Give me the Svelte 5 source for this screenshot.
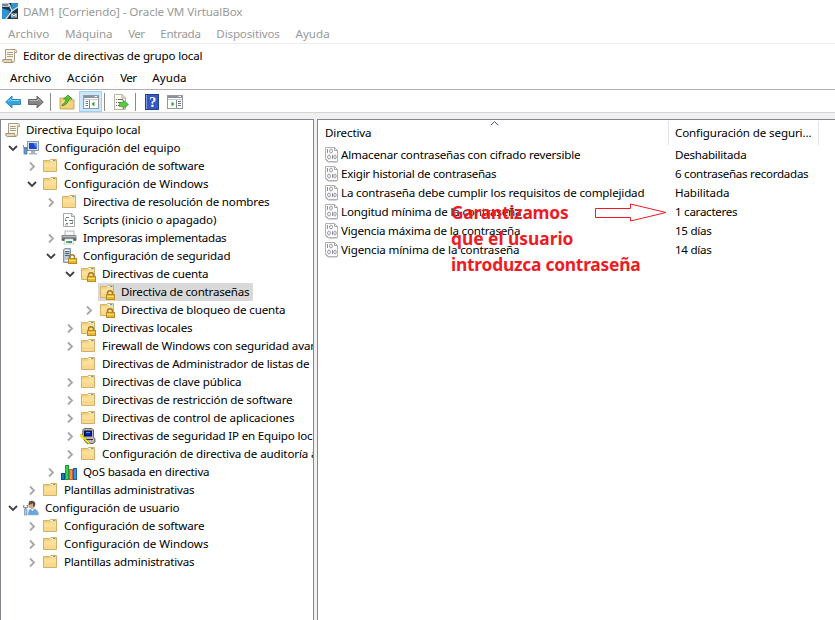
<script>
  const tree = [
    [0, 'scroll', '', 'Directiva Equipo local', 114],
    [1, 'computer', 'v', 'Configuración del equipo', 135],
    [2, 'folder', '>', 'Configuración de software', 140],
    [2, 'folder', 'v', 'Configuración de Windows', 144],
    [3, 'folder', '>', 'Directiva de resolución de nombres', 186],
    [3, 'script', '', 'Scripts (inicio o apagado)', 133],
    [3, 'printer', '>', 'Impresoras implementadas', 143],
    [3, 'server', 'v', 'Configuración de seguridad', 147],
    [4, 'locked', 'v', 'Directivas de cuenta', 106],
    [5, 'locked', '', 'Directiva de contraseñas', 128, true],
    [5, 'locked', '>', 'Directiva de bloqueo de cuenta', 164],
    [4, 'locked', '>', 'Directivas locales', 90],
    [4, 'folder', '>', 'Firewall de Windows con seguridad avan', 215],
    [4, 'folder', '', 'Directivas de Administrador de listas de', 207],
    [4, 'folder', '>', 'Directivas de clave pública', 139],
    [4, 'folder', '>', 'Directivas de restricción de software', 190],
    [4, 'folder', '>', 'Directivas de control de aplicaciones', 192],
    [4, 'ipsec', '>', 'Directivas de seguridad IP en Equipo loc', 210],
    [4, 'folder', '>', 'Configuración de directiva de auditoría a', 215],
    [3, 'chart', '>', 'QoS basada en directiva', 126],
    [2, 'folder', '>', 'Plantillas administrativas', 130],
    [1, 'user', 'v', 'Configuración de usuario', 134],
    [2, 'folder', '>', 'Configuración de software', 140],
    [2, 'folder', '>', 'Configuración de Windows', 144],
    [2, 'folder', '>', 'Plantillas administrativas', 130]
  ];
  const policies = [
    ['Almacenar contraseñas con cifrado reversible', 239, 'Deshabilitada', 71],
    ['Exigir historial de contraseñas', 155, '6 contraseñas recordadas', 133],
    ['La contraseña debe cumplir los requisitos de complejidad', 303, 'Habilitada', 54],
    ['Longitud mínima de la contraseña', 180, '1 caracteres', 62],
    ['Vigencia máxima de la contraseña', 179, '15 días', 36],
    ['Vigencia mínima de la contraseña', 178, '14 días', 36]
  ];
  const vmMenu = [['Archivo', 41], ['Máquina', 47], ['Ver', 16], ['Entrada', 40], ['Dispositivos', 63], ['Ayuda', 34]];
  const appMenu = [['Archivo', 41], ['Acción', 37], ['Ver', 16], ['Ayuda', 34]];
  const note = [['Garantizamos', 117], ['que el usuario', 122], ['introduzca contraseña', 189]];

  // Tracks a label so that it spans the given width.
  function fit(node, width) {
    const natural = node.getBoundingClientRect().width;
    node.style.letterSpacing = (width + 0.4 - natural) / node.textContent.length + 'px';
  }
</script>

{#snippet label(text, width)}<span class="label" use:fit={width}>{text}</span>{/snippet}

{#snippet folderShape()}
  <path d="M1.5 2.5H7.5L8.5 1.5H14.5V13.5H1.5Z" fill="#f3d27f" stroke="#d3b069" />
  <path d="M2 5H8L9.5 3.5H14V13H2Z" fill="#fbe09a" />
  <path d="M2 9H14V13H2Z" fill="#f7d88c" />
  <path d="M8.5 2.5H14" stroke="#fff" /><path d="M11 2.5H13.5" stroke="#4a9fe0" />
{/snippet}

{#snippet padlock()}
  <path d="M8.5 11V9.2a2.5 2.5 0 0 1 5 0V11" fill="none" stroke="#a17a28" stroke-width="1.4" />
  <rect x="7.5" y="10.5" width="8" height="5" fill="#edb72d" stroke="#b98a1f" />
  <path d="M8 12.5H15" stroke="#ffdf77" />
{/snippet}

{#snippet icon(kind)}
  <svg class="icon" width="16" height="16" viewBox="0 0 16 16">
    {#if kind === 'folder'}
      {@render folderShape()}
    {:else if kind === 'locked'}
      {@render folderShape()}{@render padlock()}
    {:else if kind === 'scroll'}
      <path d="M3.5 1.5H13Q15 1.5 14.5 4.5H12.5V12Q12.5 14.5 10.5 14.5H2Q.5 14 1 11.5H3.5Z" fill="#fbf5df" stroke="#a69d88" />
      <path d="M1 11.5H9.5Q9.5 14.5 11 14.5H2Q.5 14 1 11.5Z" fill="#e6d9b5" stroke="#a3947a" />
      <path d="M5 4.5H11M5 6.5H11M5 8.5H11" stroke="#a7a299" />
      <path d="M12.5 4.5V2.5" stroke="#c7b98f" />
    {:else if kind === 'computer'}
      <rect x="4.5" y="1.5" width="11" height="9" fill="#dce3ee" stroke="#8995aa" />
      <rect x="6" y="3" width="8" height="6" fill="#1f45c8" /><path d="M10 3H14V9Z" fill="#5a8cf0" />
      <path d="M8 11H12V13H14V14.5H6V13H8Z" fill="#a9b3c4" />
      <path d="M.5 5V7.5H4.5V5M2.5 7V14" fill="none" stroke="#8794a5" />
      <rect x="1" y="8" width="3" height="6" fill="#6d9dd0" stroke="#3d6b9e" stroke-width=".7" />
    {:else if kind === 'script'}
      <path d="M2.5 1.5H10.5L13.5 4.5V14.5H2.5Z" fill="#fff" stroke="#a6a6a6" />
      <path d="M10.5 1.5V4.5H13.5" fill="none" stroke="#a6a6a6" />
      <path d="M5 5.5H8M4 8.5H6M8 8.5H12M5 11.5H7M9 11.5H12" stroke="#717b88" />
      <path d="M4.5 6V8M11.5 9V11M4.5 12V13H7" fill="none" stroke="#a4abb5" />
    {:else if kind === 'printer'}
      <rect x="4" y="1" width="9" height="5" fill="#f7f7f7" stroke="#999" stroke-width=".7" />
      <rect x=".5" y="5" width="15" height="6" rx="1" fill="#85888d" />
      <path d="M2 6.5H15" stroke="#b8bbc0" /><path d="M1 9.5H15" stroke="#555a61" stroke-width="2" />
      <path d="M4 9H12L13 14H3Z" fill="#fff" stroke="#bbb" stroke-width=".7" />
      <path d="M5 12H9" stroke="#54b35a" stroke-width="2" /><path d="M8 12H11" stroke="#3184d0" stroke-width="2" />
    {:else if kind === 'server'}
      <path d="M2.5 1.5L4 .5H9.5V14.5H2.5Z" fill="#b9c7d4" stroke="#8796a3" />
      <path d="M4 3.5H8.5M4 5.5H8.5M4 7.5H8.5" stroke="#526879" /><path d="M4 2.5H8.5M4 12.5H7" stroke="#fff" />
      {@render padlock()}
    {:else if kind === 'ipsec'}
      <path d="M3 1.5L5 .5H12L13.5 2V9L15 11V14L13 15.5H7L4 12V9L2.5 8Z" fill="#b8b8b8" stroke="#666" />
      <rect x="4" y="2.5" width="8" height="6" fill="#111" /><rect x="5.5" y="3.5" width="5.5" height="4" fill="#0918c8" />
      <path d="M6 4.5H10" stroke="#1eb0e8" /><path d="M6 11.5H13" stroke="#333" />
      <path d="M0 6L3 7.5L4 9.5L10 15L9 16L3 10.5L1 9.5Z" fill="#fff000" stroke="#b5ad00" stroke-width=".4" />
    {:else if kind === 'chart'}
      <rect x=".5" y="9.5" width="3" height="6" fill="#1673c8" stroke="#07518e" />
      <rect x="4.5" y="1.5" width="3" height="14" fill="#35d04c" stroke="#1c9a3b" />
      <rect x="8.5" y="5.5" width="3" height="10" fill="#f58a58" stroke="#cb5c30" />
      <rect x="12.5" y="4.5" width="3" height="11" fill="#2f9be6" stroke="#1464a8" />
    {:else if kind === 'user'}
      <path d="M5 15Q5 8.5 9.5 8.5Q15.5 9 15.5 15Z" fill="#68a6dc" stroke="#98b9d8" stroke-width=".6" />
      <circle cx="8.5" cy="5" r="3.4" fill="#d5a982" /><path d="M6 5Q5 0 9 .8Q13.5 1 12 6L10 7V3.5Z" fill="#5a514d" />
      <path d="M8 9L9.5 11L11 9Z" fill="#fff" />
      <path d="M.7 5V7.5H4.3V5M2.5 7V15" fill="none" stroke="#8794a5" stroke-width="1.2" />
      <rect x="1.5" y="9" width="2.5" height="6" fill="#a9c4e4" stroke="#6989ad" stroke-width=".6" />
    {:else if kind === 'policy'}
      <path d="M1.5 .5H10.5L13.5 3.5V14.5H4.5L1.5 11.5Z" fill="#fff" stroke="#b0b0b0" />
      <path d="M1 12L4 15H13" fill="none" stroke="#b2b2b2" /><path d="M10.5 .5V3.5H13.5" fill="none" stroke="#a3a3a3" />
      <path d="M3.5 2V6" stroke="#8d8d9c" /><ellipse cx="7" cy="4" rx="1.4" ry="2" fill="none" stroke="#9898a6" />
      <ellipse cx="5" cy="10" rx="1.4" ry="2" fill="none" stroke="#9898a6" /><path d="M8.5 8V12" stroke="#8d8d9c" />
      <ellipse cx="11" cy="10" rx="1.2" ry="2" fill="none" stroke="#9898a6" />
    {:else if kind === 'vm'}
      <rect width="16" height="16" fill="#16374f" /><path d="M0 5L8 8L4 16H0ZM9 0H16V5L10 7Z" fill="#3293d3" />
      <path d="M7 1L10 8L4 16M10 8L16 4" fill="none" stroke="#d7e8f2" stroke-width="1.3" />
      <rect width="7" height="4" fill="#b7c2c9" /><path d="M1 1V3M3 1V3M5 1V3" stroke="#344b5d" />
      <path d="M9 10H15V15H9Z" fill="#76899a" /><path d="M10 14V11L12 13L14 11V14" fill="none" stroke="#eee" />
    {:else if kind === 'back' || kind === 'forward'}
      <path d={kind === 'back' ? 'M.7 8L7 2V5.5H15.5V10.5H7V14Z' : 'M15.3 8L9 2V5.5H.5V10.5H9V14Z'}
        fill={kind === 'back' ? '#2fa5e6' : '#858585'} stroke={kind === 'back' ? '#3b86b8' : '#666'} />
      <path d={kind === 'back' ? 'M3 7.5L6 4.8V6.5H14.5' : 'M1.5 6.5H10V4.8L13 7.5'} fill="none" stroke={kind === 'back' ? '#83d4fa' : '#b6b6b6'} />
    {:else if kind === 'up'}
      <path d="M1 4H6L8 6H15V15H1Z" fill="#f4d37f" stroke="#bf974c" stroke-width=".8" /><path d="M9 4H13V6" fill="none" stroke="#d1aa60" />
      <path d="M3 11Q7 9 7 5H4.5L9 1L13 5H10Q9.5 10 3 12Z" fill="#55c52e" stroke="#28841d" stroke-width=".7" />
    {:else if kind === 'panel-left' || kind === 'panel-right'}
      <rect x=".5" y="1.5" width="15" height="13" fill="#fff" stroke="#9299a1" />
      <path d="M1 3H15" stroke="#89929b" stroke-width="2" /><path d="M11.5 2.5H14" stroke="#fff" />
      <path d="M1 5.5H15" stroke="#c5cad0" />
      {#if kind === 'panel-left'}
        <path d="M6.5 6V14" stroke="#888" /><path d="M2.5 7.5H5M2.5 9.5H5M2.5 11.5H5" stroke="#4e83b4" /><path d="M11.5 7.5V12.5L8.5 10Z" fill="#36a838" />
      {:else}
        <path d="M9.5 6V14" stroke="#888" /><path d="M11 7.5H14M11 9.5H14M11 11.5H14" stroke="#667483" /><path d="M4.5 7.5V12.5L7.5 10Z" fill="#36a838" />
      {/if}
    {:else if kind === 'export'}
      <path d="M1.5 .5H9L12.5 4V15.5H1.5Z" fill="#fffce9" stroke="#b8b2a5" /><path d="M9 .5V4H12.5" fill="none" stroke="#aaa497" />
      <path d="M3 5.5H4M5 5.5H10M3 8.5H4M5 8.5H8M3 11.5H4M5 11.5H8" stroke="#61676f" />
      <path d="M6.5 8.5H10V6L15.5 10.5L10 15V12.5H6.5Z" fill="#5ac743" stroke="#3d9b31" stroke-width=".7" />
    {:else if kind === 'help'}
      <rect x="1.5" y=".5" width="13" height="15" fill="#345ac2" stroke="#203f98" /><path d="M2.5 1V15" stroke="#7f9ce4" />
      <text x="8.7" y="13.2" text-anchor="middle" class="question">?</text>
    {/if}
  </svg>
{/snippet}

<div class="window">
  <header class="title vm">{@render icon('vm')}{@render label('DAM1 [Corriendo] - Oracle VM VirtualBox', 219)}</header>
  <nav class="menu vm-menu">{#each vmMenu as [t, w]}{@render label(t, w)}{/each}</nav>
  <header class="title editor">{@render icon('scroll')}{@render label('Editor de directivas de grupo local', 179)}</header>
  <nav class="menu app-menu">{#each appMenu as [t, w]}{@render label(t, w)}{/each}</nav>
  <div class="toolbar">
    <span class="tool">{@render icon('back')}</span>
    <span class="tool">{@render icon('forward')}</span>
    <i class="sep"></i>
    <span class="tool">{@render icon('up')}</span>
    <span class="tool active">{@render icon('panel-left')}</span>
    <i class="sep tight"></i>
    <span class="tool">{@render icon('export')}</span>
    <i class="sep"></i>
    <span class="tool">{@render icon('help')}</span>
    <span class="tool">{@render icon('panel-right')}</span>
  </div>
  <main>
    <section class="tree">
      {#each tree as [level, kind, state, text, width, selected]}
        <div class="node l{level}">
          <span class="twist">
            {#if state}
              <svg width="10" height="10" viewBox="0 0 10 10" class:open={state === 'v'}>
                <path d={state === 'v' ? 'M1 3L5 7L9 3' : 'M3 1.5L7 5.5L3 9.5'} />
              </svg>
            {/if}
          </span>
          <div class="entry" class:selected>{@render icon(kind)}{@render label(text, width)}</div>
        </div>
      {/each}
    </section>
    <section class="list">
      <div class="head">
        <div class="col name">{@render label('Directiva', 46)}
          <svg class="sort" width="9" height="5" viewBox="0 0 9 5"><path d="M.7 4.3L4.5 .7L8.3 4.3" /></svg>
        </div>
        <div class="col value">{@render label('Configuración de seguri...', 136)}</div>
      </div>
      {#each policies as [name, nw, value, vw]}
        <div class="row">
          <div class="cell name">{@render icon('policy')}{@render label(name, nw)}</div>
          <div class="cell value">{@render label(value, vw)}</div>
        </div>
      {/each}
      <div class="note">{#each note as [t, w]}<div>{@render label(t, w)}</div>{/each}</div>
      <svg class="arrow" width="72" height="20" viewBox="0 0 72 20"><path d="M.5 5.5H35.5V1L71 9.5L35.5 18V14.5H.5Z" /></svg>
    </section>
  </main>
</div>

<style>
  :global(body) { margin: 0; }
  .window { width: 835px; height: 620px; display: flex; flex-direction: column; overflow: hidden; background: #fff; color: #000; font: 11.6px/16px 'Noto Sans', 'Open Sans', sans-serif; }
  .label { white-space: pre; flex: none; }
  .icon { flex: none; display: block; }
  .title { display: flex; align-items: center; box-sizing: border-box; }
  .title.vm { height: 24px; padding-left: 2px; gap: 5px; color: #999; }
  .title.vm .icon { margin-bottom: 2px; }
  .menu { display: flex; align-items: center; gap: 15.7px; box-sizing: border-box; }
  .vm-menu { height: 20px; padding-left: 8px; color: #999; border-bottom: 1px solid #eee; }
  .title.editor { height: 24px; padding: 0 0 0 2px; gap: 5px; }
  .app-menu { height: 22px; padding: 0 0 1px 10px; border-bottom: 1px solid #b0b0b0; }
  .toolbar { height: 23px; box-sizing: border-box; flex: none; display: flex; align-items: flex-end; padding-left: 1px; border-bottom: 1px solid #d5d5d5; }
  .tool { width: 23px; height: 21px; padding: 3px 0 0 4px; box-sizing: border-box; flex: none; }
  .tool.active { margin-left: 1px; padding: 2px 0 0 3px; background: #cce8ff; border: 1px solid #99d1ff; }
  .sep { width: 1px; height: 18px; background: #8c8c8c; margin: 0 4px 1px 3px; }
  .sep.tight { margin-left: 2px; }
  .question { font: bold 14px 'Liberation Serif', serif; fill: #fff; }
  main { flex: 1; min-height: 0; display: flex; gap: 3px; padding-top: 6px; background: #f0f0f0; }
  .tree { width: 314px; box-sizing: border-box; background: #fff; border: 1px solid #828790; border-bottom: 0; padding-top: 1px; overflow: hidden; }
  .node { height: 18px; display: flex; align-items: center; }
  .l0 .twist { width: 3px; }
  .l1 { padding-left: 7px; } .l2 { padding-left: 26px; } .l3 { padding-left: 45px; } .l4 { padding-left: 64px; } .l5 { padding-left: 83px; }
  .twist { width: 15px; flex: none; }
  .twist svg { display: block; }
  .twist path { fill: none; stroke: #a6a6a6; stroke-width: 1.8; }
  .twist .open path { stroke: #404040; }
  .entry { height: 18px; display: flex; align-items: center; gap: 6px; padding: 0 4px 0 1px; margin-left: -1px; flex: none; }
  .l0 .entry { padding-left: 2px; gap: 5px; }
  .selected { background: #d9d9d9; }
  .list { position: relative; flex: 1; box-sizing: border-box; background: #fff; border: 1px solid #828790; border-right: 0; border-bottom: 0; overflow: hidden; }
  .head { height: 24px; display: flex; margin: 1px 0 0; }
  .col { box-sizing: border-box; display: flex; align-items: center; border-right: 1px solid #e2e2e2; }
  .col.name { position: relative; width: 351px; padding-left: 7px; }
  .col.value { width: 150px; padding-left: 6px; }
  .sort { position: absolute; left: 172px; top: 0; }
  .sort path { fill: none; stroke: #555; }
  .row { height: 19px; display: flex; }
  .cell { display: flex; align-items: center; box-sizing: border-box; }
  .cell.name { width: 351px; padding-left: 6px; gap: 1px; }
  .cell.value { padding-left: 6px; }
  .note { position: absolute; left: 133px; top: 79px; color: #ed1c24; font: bold 17.4px/26px 'Noto Sans', sans-serif; }
  .arrow { position: absolute; left: 277px; top: 83px; }
  .arrow path { fill: none; stroke: #ed1c24; }
</style>
